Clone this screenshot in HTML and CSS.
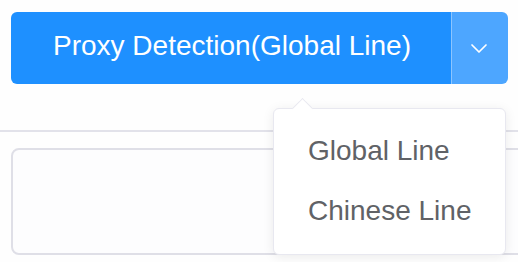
FILE: index.html
```html
<!DOCTYPE html>
<html>
<head>
<meta charset="utf-8">
<link rel="stylesheet" href="styles.css">
</head>
<body>
<div class="page">
  <div class="split-btn">
    <button class="btn-main">Proxy Detection(Global Line)</button>
    <button class="btn-caret">
      <svg width="18" height="11" viewBox="0 0 18 11"><path d="M2 2 L9 9 L16 2" fill="none" stroke="#fff" stroke-width="1.7" stroke-linecap="round" stroke-linejoin="round"/></svg>
    </button>
  </div>
  <div class="divider"></div>
  <div class="textbox"></div>
  <div class="menu">
    <div class="menu-arrow"></div>
    <div class="menu-item">Global Line</div>
    <div class="menu-item">Chinese Line</div>
  </div>
</div>
</body>
</html>
```

FILE: styles.css
```css
html, body {
  margin: 0;
  padding: 0;
  background: #fefefe;
  overflow: hidden;
}
.page {
  position: relative;
  width: 518px;
  height: 262px;
  padding-top: 12px;
  box-sizing: border-box;
  font-family: "Liberation Sans", Arial, sans-serif;
  overflow: hidden;
}
.split-btn {
  display: flex;
  margin-left: 11px;
  width: 497px;
  height: 72px;
}
.btn-main {
  flex: 0 0 441px;
  border: none;
  margin: 0;
  background: #1e90ff;
  color: #fff;
  font-family: inherit;
  font-size: 28px;
  border-radius: 6px 0 0 6px;
  padding: 0 0 4px 2px;
  border-right: 1px solid #8cc5ff;
}
.btn-caret {
  flex: 1;
  border: none;
  margin: 0;
  background: #4da6ff;
  border-radius: 0 6px 6px 0;
  display: flex;
  align-items: center;
  justify-content: center;
  padding: 0 2px 0 0;
}
.btn-caret svg { display: block; }
.divider {
  margin-top: 46px;
  height: 2px;
  background: #e2e2ea;
}
.textbox {
  margin-top: 16px;
  margin-left: 11px;
  width: 540px;
  height: 107px;
  box-sizing: border-box;
  border: 2px solid #dfdfe7;
  border-radius: 8px;
  background: #fdfdfe;
}
.menu {
  position: absolute;
  left: 273px;
  top: 108px;
  width: 233px;
  height: 147px;
  box-sizing: border-box;
  border: 1px solid #e8e8f0;
  border-radius: 6px;
  background: #fff;
  box-shadow: 0 2px 12px rgba(0, 0, 0, 0.08);
  padding: 12px 0;
}
.menu-arrow {
  position: absolute;
  left: 21px;
  top: -8px;
  width: 14px;
  height: 14px;
  background: #fff;
  border-left: 1px solid #e8e8f0;
  border-top: 1px solid #e8e8f0;
  transform: rotate(45deg);
}
.menu-item {
  height: 60px;
  line-height: 60px;
  padding: 0 34px;
  font-size: 28px;
  color: #606266;
  white-space: nowrap;
}
```
